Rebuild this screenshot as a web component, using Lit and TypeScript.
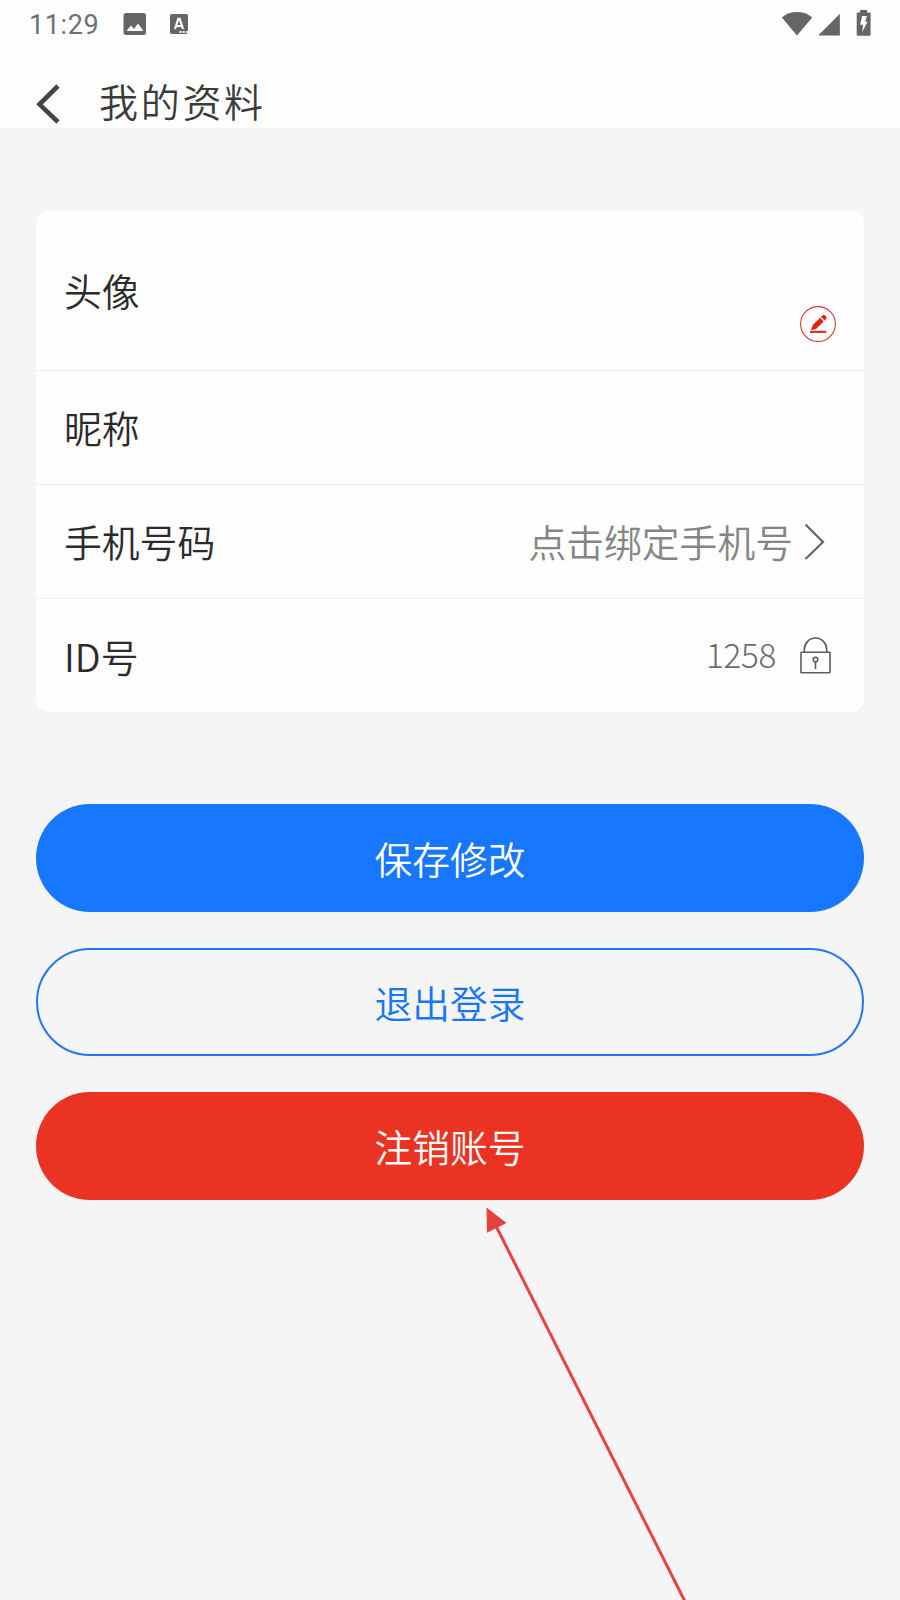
import { LitElement, html, css, svg } from "lit";
import { customElement } from "lit/decorators.js";

@customElement("status-bar")
class StatusBar extends LitElement {
  static styles = css`
    :host { display: flex; align-items: center; height: 48px; padding: 0 29px 0 29px; box-sizing: border-box; color: #666; }
    .time { font: 400 27px/48px Roboto, sans-serif; letter-spacing: 0.600px; width: 94px; padding-top: 2px; box-sizing: border-box; color: #707070; }
    .grow { flex: 1; }
    svg { display: block; fill: #666; }
    .pic { margin-right: 23px; }
    .sig { margin: 0 16px 0 5px; }
  `;
  render() {
    return html`
      <div class="time">11:29</div>
      <svg class="pic" width="24" height="48" viewBox="0 0 24 48">
        <path fill-rule="evenodd" d="M3 13h17.500a2.500 2.500 0 0 1 2.500 2.500v17a2.500 2.500 0 0 1-2.500 2.500h-17.500a2.500 2.500 0 0 1-2.500-2.500v-17a2.500 2.500 0 0 1 2.500-2.500zM3.500 31h17l-5.500-7.500-4 5.500-3-3.500z"/>
      </svg>
      <svg width="20" height="48" viewBox="0 0 20 48">
        <rect x="0" y="14" width="18" height="20" rx="2"/>
        <path d="M5 29L8.300 18.800h1.400L13 29M6.500 26h5" fill="none" stroke="#fff" stroke-width="2.200"/>
        <path d="M9.500 31h2v2h-2zM12.800 31h2v2h-2zM16.100 31h2v2h-2z" fill="#fff"/>
      </svg>
      <div class="grow"></div>
      <svg width="32" height="48" viewBox="0 0 32 48"><path d="M.8 17.500C9.500 10.300 22.500 10.300 31.200 17.500L16 35.500z"/></svg>
      <svg class="sig" width="22" height="48" viewBox="0 0 22 48"><path d="M21.900 13.800V35.500H.2z"/></svg>
      <svg width="15" height="48" viewBox="0 0 15 48">
        <path d="M4 10h7v2.500h2.600q1 0 1 1v21.300q0 1-1 1H1.700q-1 0-1-1V13.500q0-1 1-1H4z"/>
        <path d="M6 16h4.800l-1.500 5.800h2.300L6.200 32l.8-7.200H4.200z" fill="#fff"/>
      </svg>
    `;
  }
}

const pencil = svg`
  <circle cx="18" cy="18" r="17.400" fill="none" stroke="#d8392f" stroke-width="1.100"/>
  <path d="M11 24.300l1.700-5.300 7.300-7.300 3.700 3.700-7.400 7.400z" fill="#e32412"/>
  <path d="M20.900 10.700l1.300-1.200q1.800-1.200 3.400.3t.5 3.300l-1.500 1.500z" fill="#e32412"/>
  <path d="M10 24.800h16.300v2.200H10z" fill="#e0352b"/>`;

@customElement("app-root")
class AppRoot extends LitElement {
  static styles = css`
    :host { display: block; position: relative; height: 1600px; overflow: hidden; background: #f5f5f5;
      font-family: "Noto Sans CJK SC", sans-serif; color: #2b2b2b; }
    svg { display: block; flex: none; }
    .top { height: 128px; background: #fefefe; }
    .nav { display: flex; align-items: center; height: 80px; padding: 27px 0 0 36px; box-sizing: border-box; }
    .title { margin: 0 0 0 39px; padding-bottom: 4px; font-size: 39px; line-height: 48px; font-weight: 350; letter-spacing: 2.700px; color: #3b3b3b; }
    .nav svg { margin-top: 5px; }
    .card { margin: 82px 36px 0; height: 502px; border-radius: 13px; background: #fefefe; display: flex; flex-direction: column; overflow: hidden; }
    .row { flex: none; height: 114px; box-sizing: border-box; border-bottom: 1px solid #f0f0f0; display: flex; align-items: center; justify-content: space-between;
      padding: 0 28px 0 28px; font-size: 37.800px; font-weight: 350; line-height: 56px; }
    .row span { padding-bottom: 1px; }
    .row.avatar { height: 161px; }
    .row:last-child { border-bottom: 0; }
    .avatar svg { margin-top: 67px; }
    .value { display: flex; align-items: center; color: #858585; }
    .phone { padding-right: 11px; gap: 11px; }
    .idno { font-size: 33.300px; font-weight: 300; letter-spacing: -0.300px; padding-right: 5px; gap: 24px; color: #6c6c6c; }
    .row .idno span { padding-bottom: 4px; }
    .idno svg { margin-bottom: 2px; }
    .actions { margin: 92px 36px 0; display: flex; flex-direction: column; gap: 36px; }
    button { appearance: none; height: 108px; border: 0; border-radius: 54px; padding: 0 0 1px; margin: 0;
      font: 350 37.700px/56px "Noto Sans CJK SC", sans-serif; color: #fff; }
    .save { background: #1877ff; }
    .logout { background: transparent; border: 2px solid #1f78f2; color: #1877f5; }
    .delete { background: #ea3323; }
    .pointer { position: absolute; left: 480px; top: 1200px; }
  `;
  render() {
    return html`
      <div class="top">
        <status-bar></status-bar>
        <div class="nav">
          <svg width="24" height="40" viewBox="0 0 24 40"><path d="M22 2L3.500 20.300 22 38" fill="none" stroke="#444" stroke-width="4.600"/></svg>
          <h1 class="title">我的资料</h1>
        </div>
      </div>
      <div class="card">
        <div class="row avatar"><span>头像</span><svg width="36" height="36" viewBox="0 0 36 36">${pencil}</svg></div>
        <div class="row"><span>昵称</span></div>
        <div class="row"><span>手机号码</span>
          <div class="value phone"><span>点击绑定手机号</span>
            <svg width="21" height="38" viewBox="0 0 21 38"><path d="M1.500 1.500L19 19 1.500 36" fill="none" stroke="#666" stroke-width="2.200"/></svg>
          </div>
        </div>
        <div class="row"><span>ID号</span>
          <div class="value idno"><span>1258</span>
            <svg width="31" height="37" viewBox="0 0 31 37" fill="none" stroke="#5c5c5c" stroke-width="1.600">
              <path d="M4.300 15V12.500a11.200 11.500 0 0 1 22.400 0V15"/>
              <rect x="1" y="15.200" width="29" height="20.600" rx=".6"/>
              <circle cx="15.500" cy="22.500" r="2.300"/><path d="M15.500 24.500V32"/>
            </svg>
          </div>
        </div>
      </div>
      <div class="actions">
        <button class="save">保存修改</button>
        <button class="logout">退出登录</button>
        <button class="delete">注销账号</button>
      </div>
      <svg class="pointer" width="220" height="400" viewBox="480 1200 220 400">
        <path d="M496 1226L685 1601.500" stroke="#ea4242" stroke-width="3"/>
        <path d="M486.500 1207.500L506.500 1223 487 1232.700z" fill="#e54141"/>
      </svg>
    `;
  }
}
